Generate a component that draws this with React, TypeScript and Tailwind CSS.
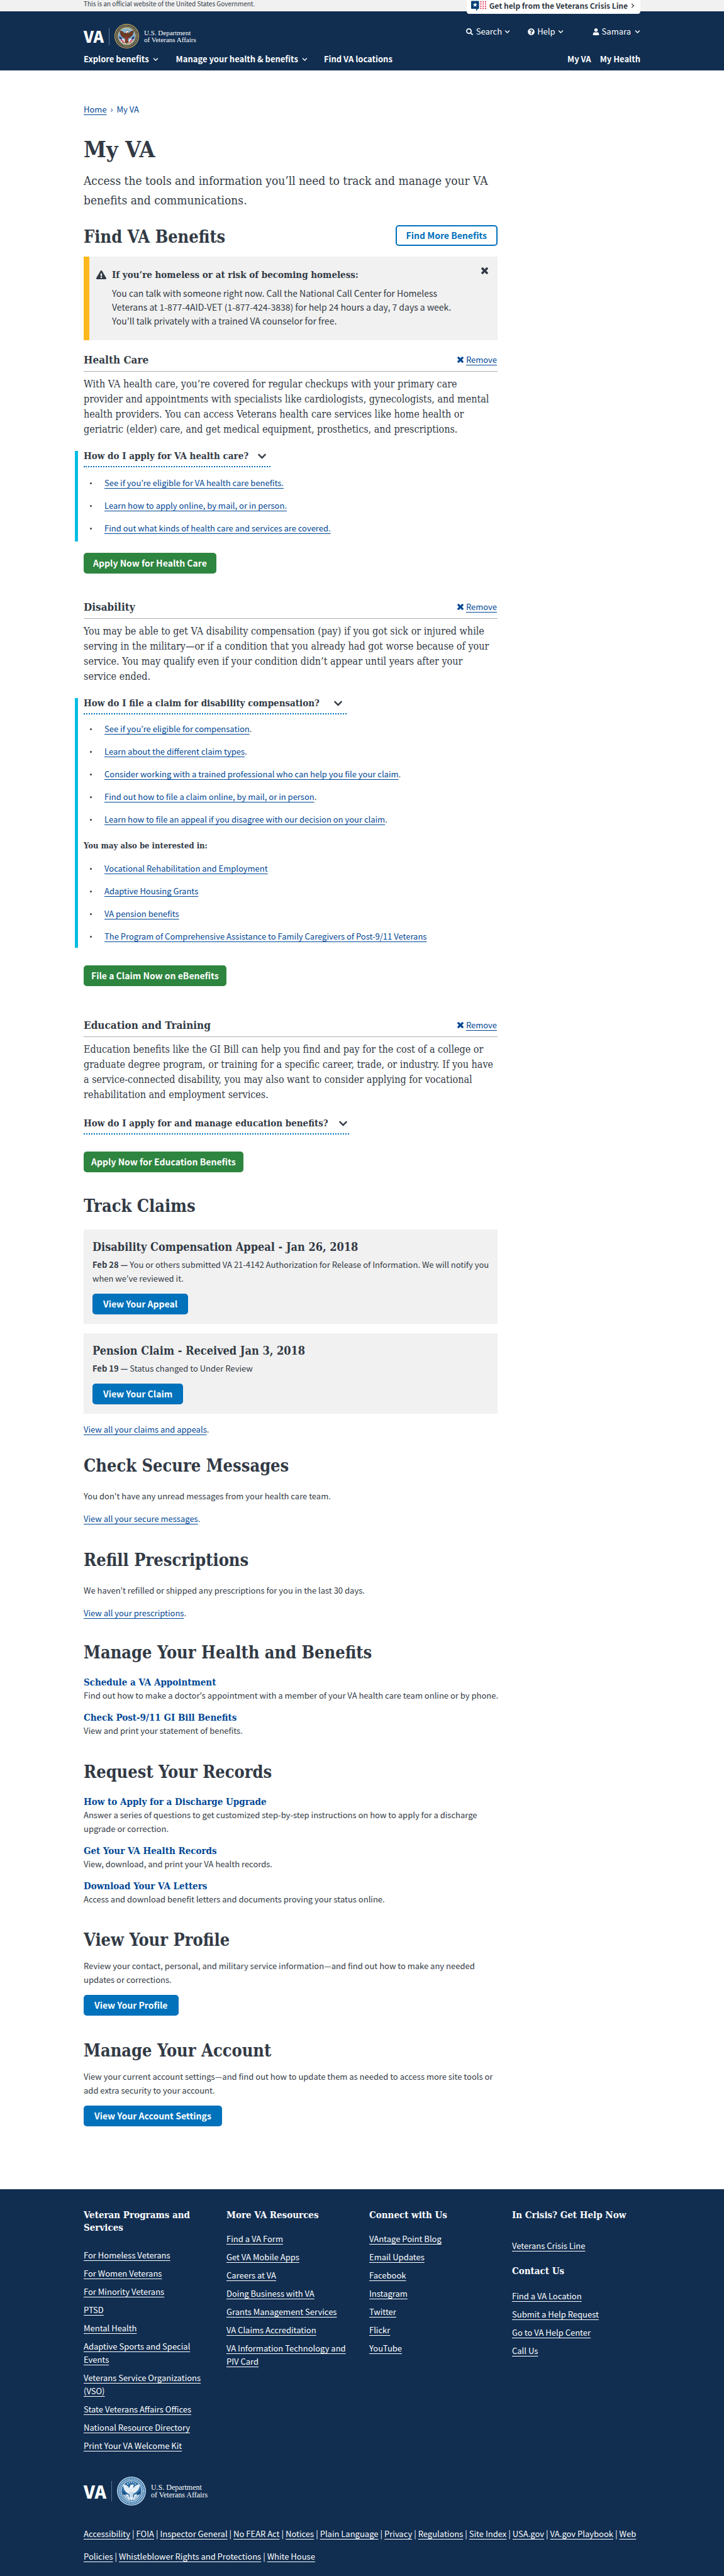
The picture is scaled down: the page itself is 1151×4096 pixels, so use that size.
import React from "react";
import {
  FaChevronDown,
  FaChevronRight,
  FaExclamationTriangle,
  FaQuestionCircle,
  FaSearch,
  FaUser,
} from "react-icons/fa";

const serif = "font-['DejaVu_Serif_Condensed','DejaVu_Serif',serif]";
const linkLine =
  "underline decoration-1 underline-offset-[3px] [text-decoration-skip-ink:none]";
const bodyLink = `text-[#004795] ${linkLine}`;

function CrossIcon({ className }: { className: string }) {
  return (
    <svg viewBox="302 366 1188 1188" className={className} fill="currentColor" aria-hidden="true">
      <path d="M1490 1322q0 40-28 68l-136 136q-28 28-68 28t-68-28l-294-294-294 294q-28 28-68 28t-68-28l-136-136q-28-28-28-68t28-68l294-294-294-294q-28-28-28-68t28-68l136-136q28-28 68-28t68 28l294 294 294-294q28-28 68-28t68 28l136 136q28 28 28 68t-28 68l-294 294 294 294q28 28 28 68z" />
    </svg>
  );
}

function CrisisIcon() {
  return (
    <svg viewBox="0 0 28 19" className="h-[17px] w-[25px] shrink-0" aria-hidden="true">
      <path d="M1 0.5h12a1 1 0 0 1 1 1v12a1 1 0 0 1-1 1h-1L9.5 18.5 8.8 14.5H1a1 1 0 0 1-1-1v-12a1 1 0 0 1 1-1z" fill="#003e73" />
      <path d="M7 3.2l1.2 3h3.1L8.8 8.1l1 3.1L7 9.3l-2.8 1.9 1-3.1-2.5-1.9h3.1z" fill="#fff" />
      {[17.2, 21.4, 25.6].map((x) =>
        [2, 5.9, 9.8, 13.7].map((y) => (
          <rect key={`${x}-${y}`} x={x - 1} y={y - 1} width="2.2" height="2.2" rx="0.8" fill="#e31c3d" />
        )),
      )}
    </svg>
  );
}

type SealColors = {
  rim: string;
  ring: string;
  letters: string;
  inner: string;
  sky: string;
  eagle: string;
  head: string;
  stripe: string;
  field: string;
  star: string;
};

const fullColor: SealColors = {
  rim: "#d9b45b",
  ring: "#14284b",
  letters: "#c9a95a",
  inner: "#d9b45b",
  sky: "#7fb2d8",
  eagle: "#6b3a24",
  head: "#f4f1ea",
  stripe: "#c23a45",
  field: "#2b3f75",
  star: "#e8c95e",
};

const blueWhite: SealColors = {
  rim: "#c9dcec",
  ring: "#2f6ea5",
  letters: "#b7d0e5",
  inner: "#e3edf5",
  sky: "#2f6ea5",
  eagle: "#e3edf5",
  head: "#ffffff",
  stripe: "#8fb6d6",
  field: "#1c4f80",
  star: "#e3edf5",
};

function Seal({ c, className }: { c: SealColors; className: string }) {
  return (
    <svg viewBox="0 0 84 84" className={className} aria-hidden="true">
      <circle cx="42" cy="42" r="42" fill={c.rim} />
      <circle cx="42" cy="42" r="39.5" fill={c.ring} />
      <circle cx="42" cy="42" r="35" fill="none" stroke={c.letters} strokeWidth="5" strokeDasharray="2.6 1.9" />
      <circle cx="42" cy="42" r="31" fill={c.inner} />
      <circle cx="42" cy="42" r="29" fill={c.sky} />
      {[[31, 21], [36, 17.5], [42, 16], [48, 17.5], [53, 21]].map(([x, y]) => (
        <circle key={x} cx={x} cy={y} r="1.7" fill={c.star} />
      ))}
      <path d="M18 52l15 0 4 17c-9-2-16-8-19-17z" fill="#fff" />
      <path d="M66 52l-15 0-4 17c9-2 16-8 19-17z" fill="#fff" />
      <path d="M18 50l14 9M21 56l13 8M66 50l-14 9M63 56l-13 8M26 62l10 5M58 62l-10 5" stroke={c.stripe} strokeWidth="2.4" fill="none" />
      <path d="M15 42l10 5v8l-8-5zM69 42l-10 5v8l8-5z" fill={c.field} />
      <path
        d="M18 23c8 0 13 4 17 10l3-5c1-4 4-6 7-5l5 2-4 2 2 6c4-6 9-10 18-10 0 10-4 18-11 22l-8 5-1 7 4 10-5-3-3 7-3-7-5 3 3-10-1-6-8-5c-6-4-10-13-10-23z"
        fill={c.eagle}
      />
      <path d="M38 29c1-4 4-6 7-5l5 2-5 2-1 3-6-1z" fill={c.head} />
      <path d="M36 44h12v9c0 4-3 6-6 8-3-2-6-4-6-8z" fill={c.stripe} opacity="0.35" />
      <path d="M31 63q11 8 22 0" stroke={c.star} strokeWidth="2" fill="none" />
    </svg>
  );
}

function GreenButton({ children, pad }: { children: React.ReactNode; pad: string }) {
  return (
    <button className={`block h-[33px] rounded-[5px] bg-[#2e8540] text-[14px] leading-[33px] font-bold whitespace-nowrap text-white ${pad}`}>
      {children}
    </button>
  );
}

function BlueButton({ children }: { children: React.ReactNode }) {
  return (
    <button className="mt-[13px] block h-[33px] rounded-[5px] bg-[#0071bb] px-[17px] text-[14px] leading-[33px] font-bold whitespace-nowrap text-white">
      {children}
    </button>
  );
}

function BenefitHeading({ children, space }: { children: React.ReactNode; space: string }) {
  return (
    <div className={`flex items-end justify-between border-b border-[#aeb0b5] pb-1.5 ${space}`}>
      <h3 className={`text-[17px] leading-6 font-bold ${serif}`}>{children}</h3>
      <button className="flex items-center gap-1 pr-px text-[13px] leading-6 text-[#004795]">
        <CrossIcon className="h-[10px] w-[10px]" />
        <span className={linkLine}>Remove</span>
      </button>
    </div>
  );
}

function Question({ children, space }: { children: React.ReactNode; space: string }) {
  return (
    <button className={`flex items-center border-b-2 border-dotted border-[#0071bb] pb-2 text-[15px] leading-4 font-bold whitespace-nowrap ${serif} ${space}`}>
      {children}
      <FaChevronDown className="h-[15px] w-[15px]" />
    </button>
  );
}

function LinkList({ items, dot, space }: { items: string[]; dot?: boolean; space: string }) {
  return (
    <ul className={space}>
      {items.map((item) => (
        <li key={item} className="flex items-center text-[13px] leading-9">
          <span className="mr-5 ml-[10px] h-[3px] w-[3px] shrink-0 rounded-full bg-[#323a45]" />
          <span>
            <a href="#" className={bodyLink}>{item}</a>
            {dot ? "." : ""}
          </span>
        </li>
      ))}
    </ul>
  );
}

function SectionTitle({ children, space }: { children: React.ReactNode; space: string }) {
  return <h2 className={`text-[27px] leading-[37px] font-bold whitespace-nowrap ${serif} ${space}`}>{children}</h2>;
}

function Task({ title, space, children }: { title: string; space: string; children: React.ReactNode }) {
  return (
    <div className={space}>
      <h3 className={`text-[15px] leading-5 font-bold ${serif}`}>
        <a href="#" className="text-[#004795]">{title}</a>
      </h3>
      <p className="text-[13px] leading-[22px] whitespace-nowrap">{children}</p>
    </div>
  );
}

function ViewAll({ children, space }: { children: React.ReactNode; space: string }) {
  return (
    <p className={`text-[13px] leading-[22px] ${space}`}>
      <a href="#" className={bodyLink}>{children}</a>.
    </p>
  );
}

function FooterHeading({ children }: { children: React.ReactNode }) {
  return <h2 className={`text-[15px] leading-5 font-bold whitespace-nowrap ${serif}`}>{children}</h2>;
}

function FooterLinks({ items, space }: { items: string[]; space: string }) {
  return (
    <ul className={`flex flex-col gap-2 ${space}`}>
      {items.map((item) => (
        <li key={item} className="text-[13px] leading-[21px]">
          <a href="#" className={`whitespace-pre ${linkLine}`}>{item}</a>
        </li>
      ))}
    </ul>
  );
}

const legal = [
  "Accessibility", "FOIA", "Inspector General", "No FEAR Act", "Notices", "Plain Language", "Privacy",
  "Regulations", "Site Index", "USA.gov", "VA.gov Playbook", "Web Policies",
  "Whistleblower Rights and Protections", "White House",
];

function Header() {
  return (
    <header>
      <div className="h-[18px] bg-[#f1f1f1]">
        <div className="mx-auto flex max-w-[885px] items-start justify-between">
          <p className="text-[10px] leading-3">This is an official website of the United States Government.</p>
          <button className="relative z-10 flex h-[22px] items-center gap-1 rounded-b-[4px] bg-white pr-2 pb-1 pl-[7px] text-[12px] leading-4 font-bold whitespace-nowrap">
            <CrisisIcon />
            <span>Get help from the Veterans Crisis Line</span>
            <FaChevronRight className="h-2 w-2" />
          </button>
        </div>
      </div>
      <div className="h-[94px] bg-[#112e51] text-white">
        <div className="mx-auto max-w-[885px] pt-5">
          <div className="flex items-start justify-between">
            <a href="#" className="flex h-[39px] items-center">
              <span className="text-[25px] leading-[39px] font-black">VA</span>
              <span className="ml-2 h-7 w-px bg-[#5b7494]" />
              <Seal c={fullColor} className="ml-2 h-[39px] w-[39px]" />
              <span className="ml-2 pt-px font-['Liberation_Serif',serif] text-[11px] leading-[11px] whitespace-nowrap">
                U.S. Department
                <br />
                of Veterans Affairs
              </span>
            </a>
            <div className="flex pt-0.5 text-[13px] leading-5">
              <button className="flex items-center">
                <FaSearch className="mr-[5px] h-[11px] w-[11px]" />
                Search
                <FaChevronDown className="ml-1 h-[9px] w-[9px]" />
              </button>
              <button className="ml-[28px] flex items-center">
                <FaQuestionCircle className="mr-1 h-[11px] w-[11px]" />
                Help
                <FaChevronDown className="ml-1 h-[9px] w-[9px]" />
              </button>
              <button className="ml-[46px] flex items-center">
                <FaUser className="mr-1 h-[11px] w-[11px]" />
                Samara
                <FaChevronDown className="ml-[6px] h-[9px] w-[9px]" />
              </button>
            </div>
          </div>
          <nav className="mt-[7px] flex items-center text-[13px] leading-5 font-bold whitespace-nowrap">
            <button className="flex items-center">
              Explore benefits
              <FaChevronDown className="ml-[6px] h-[9px] w-[9px]" />
            </button>
            <button className="ml-[28px] flex items-center">
              Manage your health &amp; benefits
              <FaChevronDown className="ml-[6px] h-[9px] w-[9px]" />
            </button>
            <a href="#" className="ml-[26px]">Find VA locations</a>
            <a href="#" className="ml-auto">My VA</a>
            <a href="#" className="ml-[14px]">My Health</a>
          </nav>
        </div>
      </div>
    </header>
  );
}

function Footer() {
  return (
    <footer className="mt-[100px] bg-[#112e51] pb-[13px] text-white">
      <div className="mx-auto max-w-[885px] pt-[31px]">
        <div className="grid grid-cols-[227fr_227fr_227fr_204fr]">
          <div>
            <FooterHeading>Veteran Programs and<br />Services</FooterHeading>
            <FooterLinks
              space="mt-[23px]"
              items={[
                "For Homeless Veterans", "For Women Veterans", "For Minority Veterans", "PTSD", "Mental Health",
                "Adaptive Sports and Special\nEvents", "Veterans Service Organizations\n(VSO)",
                "State Veterans Affairs Offices", "National Resource Directory", "Print Your VA Welcome Kit",
              ]}
            />
          </div>
          <div>
            <FooterHeading>More VA Resources</FooterHeading>
            <FooterLinks
              space="mt-[17px]"
              items={[
                "Find a VA Form", "Get VA Mobile Apps", "Careers at VA", "Doing Business with VA",
                "Grants Management Services", "VA Claims Accreditation", "VA Information Technology and\nPIV Card",
              ]}
            />
          </div>
          <div>
            <FooterHeading>Connect with Us</FooterHeading>
            <FooterLinks
              space="mt-[17px]"
              items={["VAntage Point Blog", "Email Updates", "Facebook", "Instagram", "Twitter", "Flickr", "YouTube"]}
            />
          </div>
          <div>
            <FooterHeading>In Crisis? Get Help Now</FooterHeading>
            <FooterLinks space="mt-7" items={["Veterans Crisis Line"]} />
            <div className="mt-5">
              <FooterHeading>Contact Us</FooterHeading>
            </div>
            <FooterLinks
              space="mt-[19px]"
              items={["Find a VA Location", "Submit a Help Request", "Go to VA Help Center", "Call Us"]}
            />
          </div>
        </div>
        <a href="#" className="mt-[39px] flex h-[46px] items-center">
          <span className="text-[28px] leading-[46px] font-black">VA</span>
          <span className="ml-2 h-8 w-px bg-[#5b7494]" />
          <Seal c={blueWhite} className="ml-2 h-[46px] w-[46px]" />
          <span className="ml-2 font-['Liberation_Serif',serif] text-[12px] leading-3 whitespace-nowrap">
            U.S. Department
            <br />
            of Veterans Affairs
          </span>
        </a>
        <p className="mt-[27px] text-[13px] leading-9">
          {legal.map((item, i) => (
            <React.Fragment key={item}>
              {i > 0 && <span className="mx-[3px]">|</span>}
              <a href="#" className={linkLine}>{item}</a>
            </React.Fragment>
          ))}
        </p>
      </div>
    </footer>
  );
}

export default function App() {
  return (
    <div className="bg-white font-['Noto_Sans_CJK_JP',sans-serif] text-[#323a45]">
      <Header />
      <div className="mx-auto max-w-[885px]">
        <nav className="mt-[52px] flex gap-[6px] text-[13px] leading-5 text-[#004795]" aria-label="Breadcrumb">
          <a href="#" className={linkLine}>Home</a>
          <span>›</span>
          <span>My VA</span>
        </nav>
        <main className="max-w-[658px]">
          <h1 className={`mt-[33px] text-[36px] leading-10 font-bold ${serif}`}>My VA</h1>
          <p className={`mt-[15px] text-[19px] leading-[31px] whitespace-nowrap ${serif}`}>
            Access the tools and information you’ll need to track and manage your VA
            <br />
            benefits and communications.
          </p>

          <div className="mt-6 flex items-start justify-between">
            <SectionTitle space="">Find VA Benefits</SectionTitle>
            <button className="h-[33px] rounded-[5px] border-2 border-[#0071bb] px-[15px] text-[14px] leading-[29px] font-bold text-[#0071bb]">
              Find More Benefits
            </button>
          </div>

          <section className="mt-[13px] flex h-[133px] items-start border-l-[9px] border-[#ffb81c] bg-[#f1f1f1] pt-[17px] pr-[15px] pl-[11px]">
            <FaExclamationTriangle className="mt-1 h-4 w-4 shrink-0" />
            <div className="ml-[9px] whitespace-nowrap">
              <h3 className={`text-[15px] leading-6 font-bold ${serif}`}>If you’re homeless or at risk of becoming homeless:</h3>
              <p className="mt-[6px] text-[14px] leading-[22px]">
                You can talk with someone right now. Call the National Call Center for Homeless
                <br />
                Veterans at 1-877-4AID-VET (1-877-424-3838) for help 24 hours a day, 7 days a week.
                <br />
                You’ll talk privately with a trained VA counselor for free.
              </p>
            </div>
            <button className="ml-auto" aria-label="Close">
              <CrossIcon className="h-[11px] w-[11px]" />
            </button>
          </section>

          <BenefitHeading space="mt-[19px]">Health Care</BenefitHeading>
          <p className={`mt-2 text-[16px] leading-6 whitespace-nowrap ${serif}`}>
            With VA health care, you’re covered for regular checkups with your primary care
            <br />
            provider and appointments with specialists like cardiologists, gynecologists, and mental
            <br />
            health providers. You can access Veterans health care services like home health or
            <br />
            geriatric (elder) care, and get medical equipment, prosthetics, and prescriptions.
          </p>
          <div className="mt-[22px] ml-[-14px] border-l-[5px] border-[#00bde3] pb-[3px] pl-[9px]">
            <Question space="gap-[14px] pr-[6px]">How do I apply for VA health care?</Question>
            <LinkList
              space="mt-[7px]"
              items={[
                "See if you’re eligible for VA health care benefits.",
                "Learn how to apply online, by mail, or in person.",
                "Find out what kinds of health care and services are covered.",
              ]}
            />
          </div>
          <div className="mt-[18px]">
            <GreenButton pad="px-[15px]">Apply Now for Health Care</GreenButton>
          </div>

          <BenefitHeading space="mt-[41px]">Disability</BenefitHeading>
          <p className={`mt-2 text-[16px] leading-6 whitespace-nowrap ${serif}`}>
            You may be able to get VA disability compensation (pay) if you got sick or injured while
            <br />
            serving in the military—or if a condition that you already had got worse because of your
            <br />
            service. You may qualify even if your condition didn’t appear until years after your
            <br />
            service ended.
          </p>
          <div className="mt-[22px] ml-[-14px] border-l-[5px] border-[#00bde3] pl-[9px]">
            <Question space="gap-[22px] pr-[6px]">How do I file a claim for disability compensation?</Question>
            <LinkList
              dot
              space="mt-[5px]"
              items={[
                "See if you’re eligible for compensation",
                "Learn about the different claim types",
                "Consider working with a trained professional who can help you file your claim",
                "Find out how to file a claim online, by mail, or in person",
                "Learn how to file an appeal if you disagree with our decision on your claim",
              ]}
            />
            <h4 className={`mt-[14px] text-[13px] leading-5 font-bold ${serif}`}>You may also be interested in:</h4>
            <LinkList
              space="mt-2"
              items={[
                "Vocational Rehabilitation and Employment",
                "Adaptive Housing Grants",
                "VA pension benefits",
                "The Program of Comprehensive Assistance to Family Caregivers of Post-9/11 Veterans",
              ]}
            />
          </div>
          <div className="mt-7">
            <GreenButton pad="px-3">File a Claim Now on eBenefits</GreenButton>
          </div>

          <BenefitHeading space="mt-[50px]">Education and Training</BenefitHeading>
          <p className={`mt-2 text-[16px] leading-6 whitespace-nowrap ${serif}`}>
            Education benefits like the GI Bill can help you find and pay for the cost of a college or
            <br />
            graduate degree program, or training for a specific career, trade, or industry. If you have
            <br />
            a service-connected disability, you may also want to consider applying for vocational
            <br />
            rehabilitation and employment services.
          </p>
          <div className="mt-[25px]">
            <Question space="gap-4 pr-0.5">How do I apply for and manage education benefits?</Question>
          </div>
          <div className="mt-[27px]">
            <GreenButton pad="px-3">Apply Now for Education Benefits</GreenButton>
          </div>

          <SectionTitle space="mt-[35px]">Track Claims</SectionTitle>
          <article className="mt-[19px] bg-[#f1f1f1] px-[14px] pt-4 pb-[15px]">
            <h3 className={`text-[18px] leading-6 font-bold ${serif}`}>Disability Compensation Appeal - Jan 26, 2018</h3>
            <p className="mt-[5px] text-[13px] leading-[22px] whitespace-nowrap">
              <b>Feb 28 —</b> You or others submitted VA 21-4142 Authorization for Release of Information. We will notify you
              <br />
              when we’ve reviewed it.
            </p>
            <BlueButton>View Your Appeal</BlueButton>
          </article>
          <article className="mt-[15px] bg-[#f1f1f1] px-[14px] pt-4 pb-[15px]">
            <h3 className={`text-[18px] leading-6 font-bold ${serif}`}>Pension Claim - Received Jan 3, 2018</h3>
            <p className="mt-[5px] text-[13px] leading-[22px]">
              <b>Feb 19 —</b> Status changed to Under Review
            </p>
            <BlueButton>View Your Claim</BlueButton>
          </article>
          <ViewAll space="mt-[14px]">View all your claims and appeals</ViewAll>

          <SectionTitle space="mt-7">Check Secure Messages</SectionTitle>
          <p className="mt-[19px] text-[13px] leading-[22px]">You don't have any unread messages from your health care team.</p>
          <ViewAll space="mt-[14px]">View all your secure messages</ViewAll>

          <SectionTitle space="mt-9">Refill Prescriptions</SectionTitle>
          <p className="mt-[19px] text-[13px] leading-[22px]">We haven’t refilled or shipped any prescriptions for you in the last 30 days.</p>
          <ViewAll space="mt-[14px]">View all your prescriptions</ViewAll>

          <SectionTitle space="mt-[33px]">Manage Your Health and Benefits</SectionTitle>
          <Task title="Schedule a VA Appointment" space="mt-[19px]">
            Find out how to make a doctor's appointment with a member of your VA health care team online or by phone.
          </Task>
          <Task title="Check Post-9/11 GI Bill Benefits" space="mt-[14px]">
            View and print your statement of benefits.
          </Task>

          <SectionTitle space="mt-9">Request Your Records</SectionTitle>
          <Task title="How to Apply for a Discharge Upgrade" space="mt-[19px]">
            Answer a series of questions to get customized step-by-step instructions on how to apply for a discharge
            <br />
            upgrade or correction.
          </Task>
          <Task title="Get Your VA Health Records" space="mt-[14px]">
            View, download, and print your VA health records.
          </Task>
          <Task title="Download Your VA Letters" space="mt-[14px]">
            Access and download benefit letters and documents proving your status online.
          </Task>

          <SectionTitle space="mt-[35px]">View Your Profile</SectionTitle>
          <p className="mt-3 text-[13px] leading-[22px] whitespace-nowrap">
            Review your contact, personal, and military service information—and find out how to make any needed
            <br />
            updates or corrections.
          </p>
          <BlueButton>View Your Profile</BlueButton>

          <SectionTitle space="mt-[37px]">Manage Your Account</SectionTitle>
          <p className="mt-3 text-[13px] leading-[22px] whitespace-nowrap">
            View your current account settings—and find out how to update them as needed to access more site tools or
            <br />
            add extra security to your account.
          </p>
          <BlueButton>View Your Account Settings</BlueButton>
        </main>
      </div>
      <Footer />
    </div>
  );
}
